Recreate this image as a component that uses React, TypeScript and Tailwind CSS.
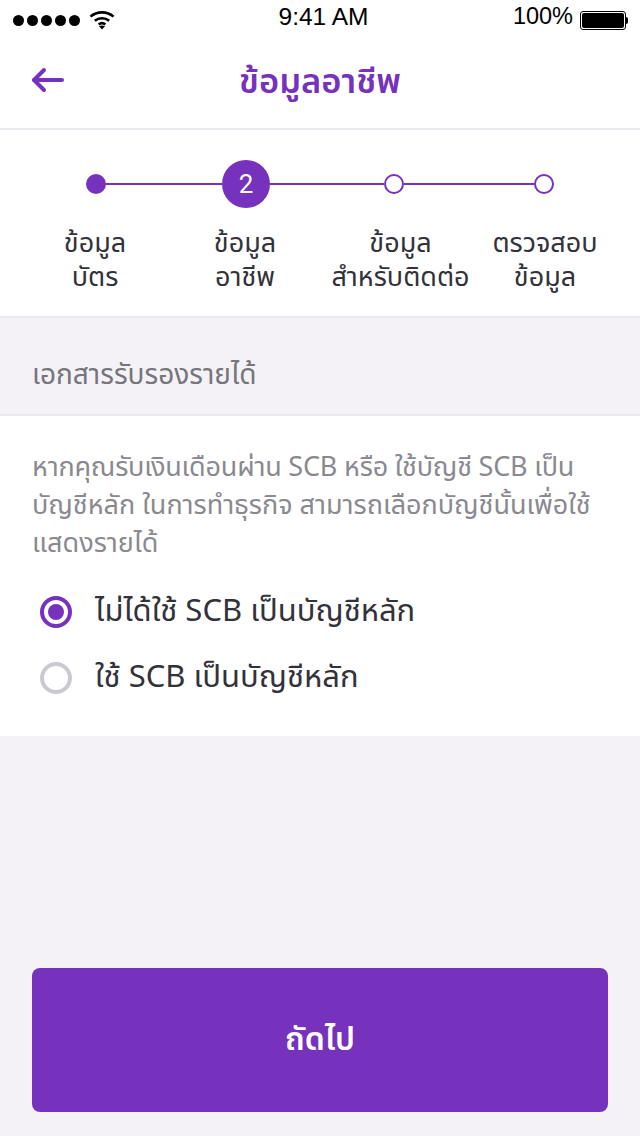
const thai = "font-['Noto_Sans_Thai','Noto_Sans','DejaVu_Sans','Liberation_Sans',sans-serif]"

function StatusBar() {
  return (
    <div className="flex h-10 items-center justify-between bg-white pl-[13px] pr-[12px] text-[24px] text-black font-['Liberation_Sans',sans-serif]">
      <div className="flex w-[206px] items-center gap-[3px]">
        {[0, 1, 2, 3, 4].map((i) => (
          <span key={i} className="h-[11px] w-[11px] rounded-full bg-black" />
        ))}
        <svg className="ml-[6px]" width="26" height="20" viewBox="0 0 26 20" fill="none" stroke="#000" strokeWidth="2.6">
          <path d="M1.5 6.6C7.8 1 18.2 1 24.5 6.6" />
          <path d="M5.8 10.8C9.8 7.4 16.2 7.4 20.2 10.8" />
          <path d="M9.6 14.4c2-1.6 4.8-1.6 6.8 0" />
          <path d="M13 19.5l-3-3.2c1.8-1.2 4.2-1.2 6 0z" fill="#000" stroke="none" />
        </svg>
      </div>
      <span className="pb-[6px] text-[24.5px] leading-none">9:41 AM</span>
      <div className="flex w-[200px] items-center justify-end gap-[7px]">
        <span className="pb-[6px] text-[23.5px] leading-none">100%</span>
        <div className="flex items-center">
          <div className="h-[19px] w-[46px] rounded-[3px] border border-black bg-white p-[1px]">
            <div className="h-full w-full rounded-[2px] bg-black" />
          </div>
          <div className="h-[7px] w-[2px] rounded-r-sm bg-black" />
        </div>
      </div>
    </div>
  )
}

function Radio({ checked, label }: { checked?: boolean; label: string }) {
  return (
    <div className="flex h-[66px] items-center gap-[23px] pl-10">
      <div
        className={
          checked
            ? 'flex h-8 w-8 items-center justify-center rounded-full border-4 border-[#7632bd]'
            : 'h-8 w-8 rounded-full border-4 border-[#c9c9d1]'
        }
      >
        {checked && <div className="h-4 w-4 rounded-full bg-[#7632bd]" />}
      </div>
      <span className="text-[31px] leading-10 text-[#33323a]">{label}</span>
    </div>
  )
}

const steps = [
  ['ข้อมูล', 'บัตร'],
  ['ข้อมูล', 'อาชีพ'],
  ['ข้อมูล', 'สำหรับติดต่อ'],
  ['ตรวจสอบ', 'ข้อมูล'],
]

export default function App() {
  return (
    <div className={`flex h-[1136px] w-[640px] flex-col overflow-hidden bg-[#f4f2f6] ${thai}`}>
      <StatusBar />

      <header className="relative flex h-[90px] items-center justify-center border-b-2 border-[#e8e8ee] bg-white">
        <svg className="absolute left-[30px] top-[26px]" width="36" height="28" viewBox="0 0 36 28" fill="none" stroke="#7632bd" strokeWidth="4" strokeLinecap="round" strokeLinejoin="round">
          <path d="M4 14h28" />
          <path d="M14 4L4 14l10 10" />
        </svg>
        <h1 className="pb-[2px] text-[34.5px] font-semibold text-[#7632bd]">ข้อมูลอาชีพ</h1>
      </header>

      <section className="h-[188px] border-b-2 border-[#e8e8ee] bg-white pt-[30px]">
        <div className="flex h-12 items-center pl-[86px]">
          <div className="h-5 w-5 shrink-0 rounded-full bg-[#7632bd]" />
          <div className="h-[2px] w-[116px] bg-[#7632bd]" />
          <div className="flex h-12 w-12 shrink-0 items-center justify-center rounded-full bg-[#7632bd] text-[26px] text-white font-['Roboto',sans-serif]">
            2
          </div>
          <div className="h-[2px] w-[114px] bg-[#7632bd]" />
          <div className="h-5 w-5 shrink-0 rounded-full border-2 border-[#7632bd] bg-white" />
          <div className="h-[2px] w-[130px] bg-[#7632bd]" />
          <div className="h-5 w-5 shrink-0 rounded-full border-2 border-[#7632bd] bg-white" />
        </div>
        <div className="mt-[19px] grid grid-cols-4 px-5 text-center text-[27px] leading-[34px] text-[#33323a]">
          {steps.map((s, i) => (
            <div key={i} className={i === 2 ? 'whitespace-nowrap pl-[11px]' : 'whitespace-nowrap'}>
              {s[0]}
              <br />
              {s[1]}
            </div>
          ))}
        </div>
      </section>

      <div className="flex h-[98px] items-center border-b-2 border-[#e8e8ee] px-8 pt-5 text-[28px] text-[#76757c]">
        เอกสารรับรองรายได้
      </div>

      <section className="h-[320px] bg-white pt-[33px]">
        <p className="whitespace-nowrap px-8 text-[27px] leading-[38px] text-[#8a8990]">
          <span className="tracking-[-0.2px]">หากคุณรับเงินเดือนผ่าน SCB หรือ ใช้บัญชี SCB เป็น</span>
          <br />
          บัญชีหลัก ในการทำธุรกิจ สามารถเลือกบัญชีนั้นเพื่อใช้
          <br />
          แสดงรายได้
        </p>
        <div className="mt-[16px]">
          <Radio checked label="ไม่ได้ใช้ SCB เป็นบัญชีหลัก" />
          <Radio label="ใช้ SCB เป็นบัญชีหลัก" />
        </div>
      </section>

      <div className="mt-auto px-8 pb-6">
        <button className="h-[144px] w-full rounded-lg bg-[#7632bd] text-[32px] font-semibold text-white">ถัดไป</button>
      </div>
    </div>
  )
}
